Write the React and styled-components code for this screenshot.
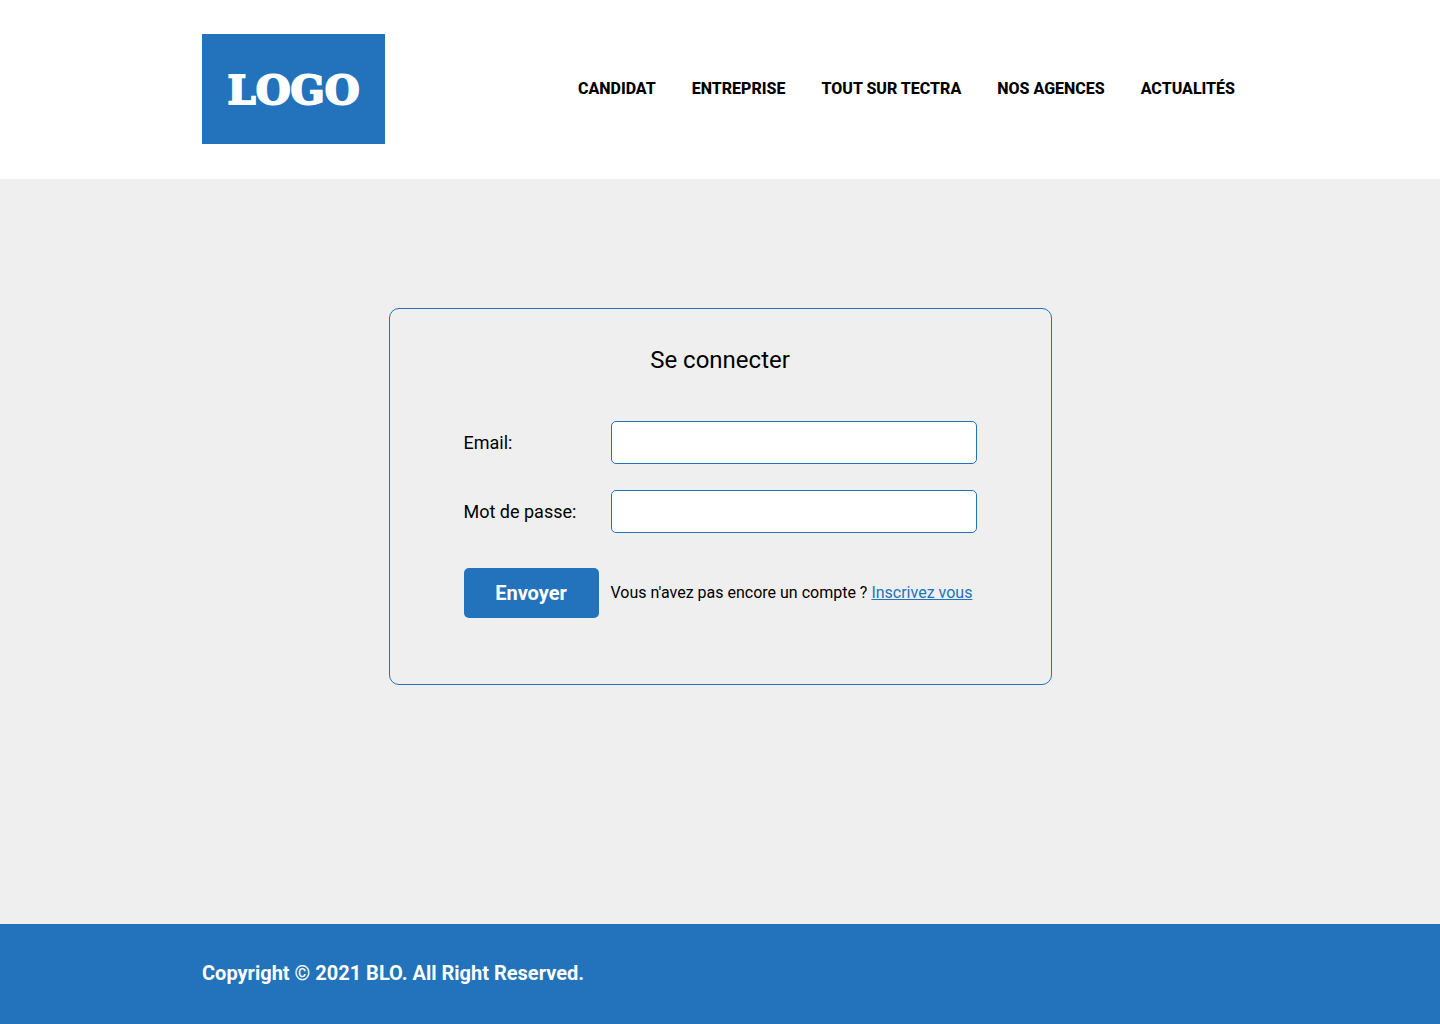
import React from "react";
import styled, { createGlobalStyle } from "styled-components";

const blue = "#2273bb";

const GlobalStyle = createGlobalStyle`
  *, *::before, *::after { box-sizing: border-box; }
  body {
    margin: 0;
    background: #efefef;
    color: #000;
    font-family: Roboto, "Liberation Sans", sans-serif;
    font-size: 18px;
  }
`;

const Page = styled.div`
  min-height: 100vh;
  display: flex;
  flex-direction: column;
`;

const Container = styled.div`
  width: 100%;
  max-width: 1036px;
  margin: 0 auto;
`;

const Header = styled.header`
  background: #fff;
  padding: 34px 24px 35px;
`;

const HeaderRow = styled(Container)`
  display: flex;
  align-items: center;
  justify-content: space-between;
`;

const Logo = styled.a`
  display: flex;
  align-items: center;
  justify-content: center;
  width: 183px;
  height: 110px;
  padding-top: 2px;
  background: ${blue};
  color: #fff;
  text-decoration: none;
`;

const LogoText = styled.span`
  font-family: "DejaVu Serif", "Liberation Serif", serif;
  font-size: 40px;
  font-weight: 700;
  line-height: 48px;
  -webkit-text-stroke: 2px #fff;
`;

const NavList = styled.ul`
  display: flex;
  gap: 36px;
  margin: 0;
  padding: 0 3px 2px 0;
  list-style: none;
`;

const NavLink = styled.a`
  color: #000;
  font-size: 16px;
  font-weight: 800;
  line-height: 20px;
  text-decoration: none;
  white-space: nowrap;
`;

const Main = styled.main`
  flex: 1;
  padding: 129px 24px;
`;

const Card = styled.form`
  width: 100%;
  max-width: 663px;
  margin: 0 auto;
  padding: 36px 74px 66px;
  border: 1px solid ${blue};
  border-radius: 10px;
`;

const Title = styled.h1`
  margin: 0 0 46px;
  font-size: 24px;
  font-weight: 400;
  line-height: 30px;
  text-align: center;
`;

const Field = styled.div`
  display: grid;
  grid-template-columns: 147px 1fr;
  align-items: center;
  margin-bottom: 26px;
`;

const Label = styled.label`
  font-size: 18px;
  line-height: 22px;
`;

const Input = styled.input`
  width: 100%;
  height: 43px;
  padding: 0 12px;
  border: 1px solid ${blue};
  border-radius: 5px;
  background: #fff;
  font: inherit;
`;

const Actions = styled.div`
  display: flex;
  align-items: center;
  gap: 12px;
  padding-top: 9px;
`;

const Submit = styled.button`
  width: 135px;
  height: 50px;
  border: 0;
  border-radius: 5px;
  background: ${blue};
  color: #fff;
  font: 700 20px/24px Roboto, "Liberation Sans", sans-serif;
  cursor: pointer;
`;

const Hint = styled.p`
  margin: 0;
  font-size: 16px;
  line-height: 20px;
  white-space: nowrap;
`;

const SignUp = styled.a`
  color: ${blue};
`;

const Footer = styled.footer`
  padding: 37px 24px 39px;
  background: ${blue};
  color: #fff;
  font-size: 20px;
  font-weight: 700;
  line-height: 24px;
`;

const links = ["CANDIDAT", "ENTREPRISE", "TOUT SUR TECTRA", "NOS AGENCES", "ACTUALITÉS"];

export default function App() {
  return (
    <Page>
      <GlobalStyle />
      <Header>
        <HeaderRow>
          <Logo href="#"><LogoText>LOGO</LogoText></Logo>
          <nav>
            <NavList>
              {links.map((text) => (
                <li key={text}><NavLink href="#">{text}</NavLink></li>
              ))}
            </NavList>
          </nav>
        </HeaderRow>
      </Header>
      <Main>
        <Card onSubmit={(e) => e.preventDefault()}>
          <Title>Se connecter</Title>
          <Field>
            <Label htmlFor="email">Email:</Label>
            <Input id="email" type="email" />
          </Field>
          <Field>
            <Label htmlFor="password">Mot de passe:</Label>
            <Input id="password" type="password" />
          </Field>
          <Actions>
            <Submit type="submit">Envoyer</Submit>
            <Hint>Vous n'avez pas encore un compte ? <SignUp href="#">Inscrivez vous</SignUp></Hint>
          </Actions>
        </Card>
      </Main>
      <Footer>
        <Container>Copyright © 2021 BLO. All Right Reserved.</Container>
      </Footer>
    </Page>
  );
}
